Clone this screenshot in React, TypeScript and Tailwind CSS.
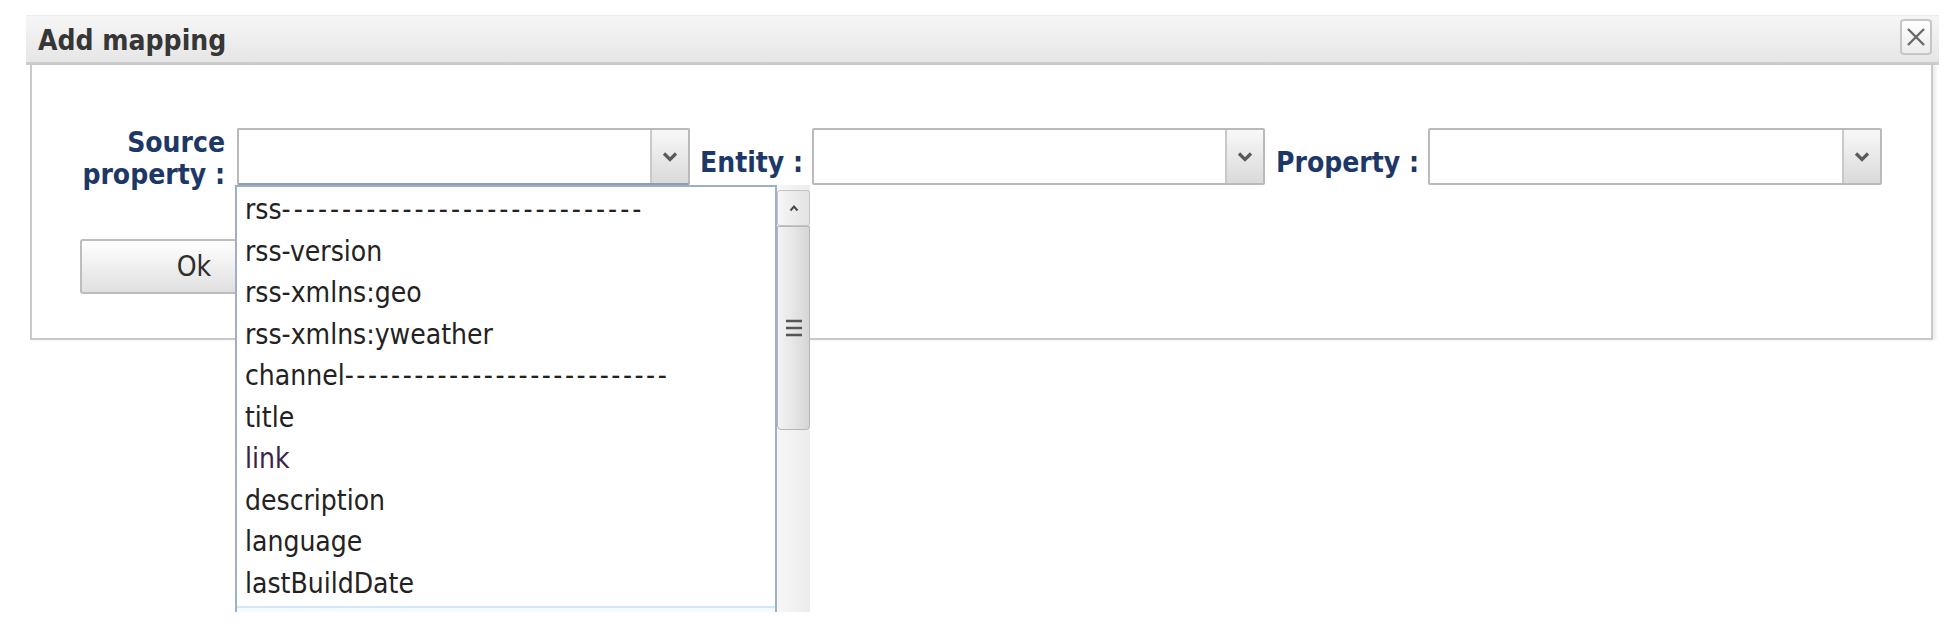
import React from 'react';

const sourceItems = [
    { label: 'rss', dashes: 30, tracking: 'tracking-[3px]' },
    { label: 'rss-version' },
    { label: 'rss-xmlns:geo' },
    { label: 'rss-xmlns:yweather' },
    { label: 'channel', dashes: 28, tracking: 'tracking-[2.5px]' },
    { label: 'title' },
    { label: 'link', color: 'text-[#3a2449]' },
    { label: 'description' },
    { label: 'language' },
    { label: 'lastBuildDate' },
];

function Chevron() {
    return (
        <svg width="16" height="11" viewBox="0 0 16 11">
            <path d="M2 2.5 L8 8.5 L14 2.5" fill="none" stroke="#5a5a5a" strokeWidth="3.2" />
        </svg>
    );
}

function SelectBox({ className }: { className: string }) {
    return (
        <div className={`flex h-[57px] shrink-0 overflow-hidden rounded-[2px] border-2 bg-white ${className}`}>
            <div className="flex-1" />
            <div className="flex w-[38px] items-center justify-center border-l-2 border-[#c9c9c9] bg-gradient-to-b from-[#f8f8f8] to-[#dadada]">
                <Chevron />
            </div>
        </div>
    );
}

export default function App() {
    return (
        <div className="relative h-[631px] w-[1958px] overflow-hidden bg-white font-['DejaVu_Sans_Condensed','Liberation_Sans',sans-serif]">
            <div className="ml-[26px] w-[1913px] pt-[15px]">
                {/* Title bar */}
                <div className="flex h-[50px] items-start justify-between border-b-[3px] border-t border-[#cdcdcd] border-t-[#ebebeb] bg-gradient-to-b from-[#f6f6f6] to-[#e6e6e6] pl-[12px] pr-[7px]">
                    <span className="mt-[9px] text-[28px] font-bold leading-[32px] text-[#363636]">Add mapping</span>
                    <button className="mt-[3px] flex h-[36px] w-[32px] items-center justify-center rounded-[4px] border-2 border-[#c6c6c6] bg-gradient-to-b from-white to-[#ececec]">
                        <svg width="22" height="22" viewBox="0 0 22 22">
                            <path d="M3 3 L19 19 M19 3 L3 19" stroke="#6a6a6a" strokeWidth="2.4" />
                        </svg>
                    </button>
                </div>

                {/* Body */}
                <div className="ml-[4px] h-[275px] w-[1903px] border-2 border-t-0 border-[#c9c9c9] bg-white pt-[63px] shadow-[3px_0_3px_rgba(0,0,0,0.08)]">
                    <div className="flex items-start text-[28px] font-bold text-[#1d3768]">
                        <div className="mt-[-1px] w-[193px] text-right leading-[32px]">
                            Source
                            <br />
                            property :
                        </div>
                        <SelectBox className="ml-[12px] w-[453px] border-[#bababa] border-b-[#8d9db2]" />
                        <div className="ml-[10px] w-[102px] whitespace-nowrap pt-[19px] text-right leading-[32px]">Entity :</div>
                        <SelectBox className="ml-[10px] w-[453px] border-[#bababa]" />
                        <div className="ml-[11px] w-[142px] whitespace-nowrap pt-[19px] text-right leading-[32px]">Property :</div>
                        <SelectBox className="ml-[10px] w-[454px] border-[#bababa]" />
                    </div>

                    <button className="ml-[48px] mt-[48px] h-[55px] w-[228px] rounded-[3px] border-2 border-[#bdbdbd] bg-gradient-to-b from-white to-[#e0e0e0] text-[28px] leading-[32px] text-[#2e2e2e]">
                        Ok
                    </button>
                </div>
            </div>

            {/* Open dropdown list */}
            <div className="absolute left-[235px] top-[185px] flex h-[427px] w-[575px]">
                <div className="flex-1 overflow-hidden border-x-2 border-t-2 border-[#9fb0c4] bg-white pt-[2px]">
                    {sourceItems.map((item) => (
                        <div key={item.label} className={`whitespace-nowrap pl-[8px] text-[28px] leading-[41.5px] ${item.color ?? 'text-[#222222]'}`}>
                            {item.label}
                            {item.dashes ? <span className={item.tracking}>{'-'.repeat(item.dashes)}</span> : null}
                        </div>
                    ))}
                    <div className="mt-[2px] h-[40px] border-t-2 border-[#d3e6f7] bg-[#f5faff]" />
                </div>
                <div className="flex w-[33px] flex-col bg-gradient-to-r from-[#f7f7f7] to-[#ececec] pt-[5px]">
                    <div className="flex h-[36px] items-center justify-center rounded-[3px] border border-[#c4c4c4] bg-gradient-to-r from-[#f6f6f6] to-[#e2e2e2]">
                        <svg width="10" height="8" viewBox="0 0 10 8">
                            <path d="M1.5 6.5 L5 2.5 L8.5 6.5" fill="none" stroke="#4a4a4a" strokeWidth="2" />
                        </svg>
                    </div>
                    <div className="flex h-[204px] items-center justify-center rounded-b-[4px] border border-[#b6b6b6] bg-gradient-to-r from-[#f3f3f3] via-[#e6e6e6] to-[#d6d6d6]">
                        <svg width="18" height="20" viewBox="0 0 18 20">
                            <path d="M1 3 H17 M1 10 H17 M1 17 H17" stroke="#555555" strokeWidth="2.6" />
                        </svg>
                    </div>
                    <div className="flex-1" />
                </div>
            </div>
        </div>
    );
}
